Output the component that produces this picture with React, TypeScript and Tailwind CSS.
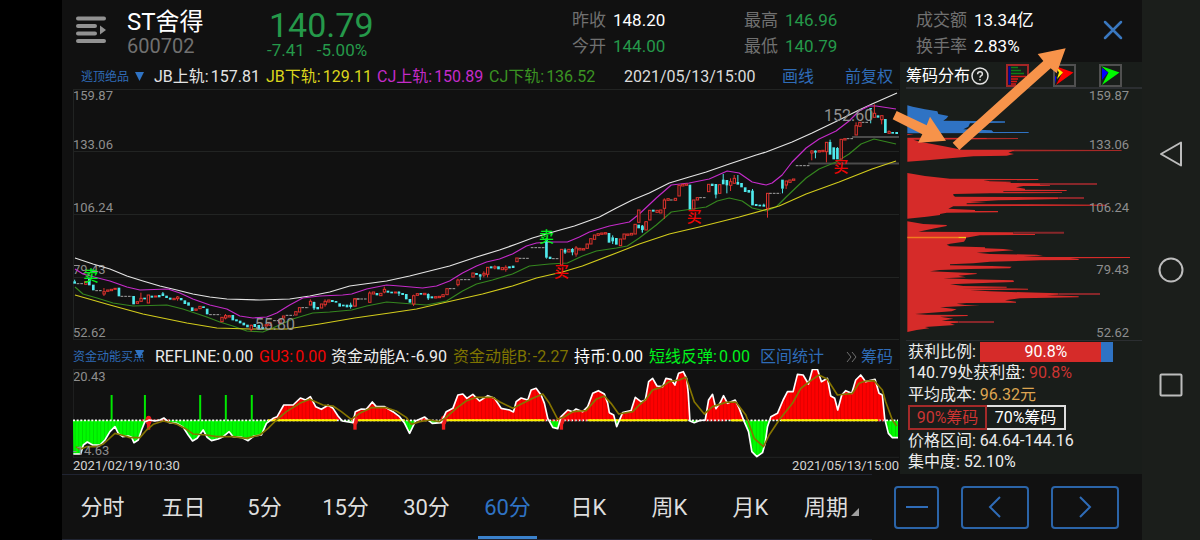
import { useState } from "react";

// [x, bodyTop, bodyBottom, up, high?, low?]
type Bar = [number, number, number, number, number?, number?];

const sessions: { origin: string; bars: Bar[]; flats: number[][] }[] = [
  {
    origin: "translate(60 230) scale(0.33333)",
    bars: [
      [44, 155, 160, 0, 149], [77, 155, 163, 1], [88, 144, 165, 0], [100, 165, 180, 0], [132, 185, 192, 1, 174, 198],
      [143, 180, 184, 1], [154, 178, 182, 1], [165, 175, 178, 1], [177, 174, 198, 0], [221, 199, 222, 0],
      [232, 215, 220, 1], [243, 205, 214, 1, 188], [254, 204, 207, 0], [265, 195, 219, 1], [276, 198, 202, 0],
      [287, 198, 201, 1], [298, 196, 201, 0], [309, 191, 197, 0, 186], [320, 198, 203, 0], [331, 204, 208, 0],
      [342, 205, 209, 1], [353, 201, 206, 1, 198, 212], [364, 205, 210, 0], [375, 212, 221, 0], [386, 218, 226, 0],
      [397, 233, 242, 0], [408, 237, 241, 1], [420, 229, 236, 1], [431, 230, 233, 0], [442, 237, 252, 0],
      [486, 262, 275, 1], [497, 257, 264, 1, 252, 268], [508, 257, 261, 1], [519, 256, 270, 0], [530, 269, 273, 0],
      [541, 273, 279, 0], [552, 279, 285, 0], [563, 285, 291, 0], [574, 286, 298, 1, 284, 304], [585, 283, 290, 0],
      [597, 286, 297, 0], [608, 292, 297, 0], [619, 284, 288, 1], [630, 277, 286, 1], [660, 268, 280, 1], [671, 258, 264, 1],
      [708, 245, 255, 1], [719, 233, 246, 1], [752, 214, 225, 1, 208], [763, 217, 234, 0, 215, 240], [774, 232, 237, 0],
      [785, 222, 234, 1], [796, 214, 224, 1, 208, 230], [807, 210, 216, 1], [818, 211, 215, 0], [829, 214, 217, 0],
      [840, 221, 229, 0], [851, 225, 228, 0], [862, 225, 231, 0], [873, 226, 230, 0, 218, 236], [886, 206, 228, 1],
    ],
    flats: [[50, 72, 161], [106, 128, 182], [182, 216, 199], [448, 482, 254], [640, 656, 272], [678, 702, 256], [725, 748, 233], [892, 900, 207]],
  },
  {
    origin: "translate(350 170) scale(0.33333)",
    bars: [
      [4, 405, 410, 0], [15, 387, 408, 1], [60, 369, 397, 1, 364], [71, 366, 372, 1], [82, 370, 375, 0], [93, 370, 377, 1],
      [104, 358, 366, 1, 350, 370], [115, 363, 367, 0], [126, 366, 369, 0], [137, 366, 369, 1], [148, 366, 370, 0, 364, 378],
      [159, 370, 374, 0], [170, 373, 387, 0], [181, 388, 397, 0], [192, 377, 402, 1, 374, 408], [203, 371, 376, 1],
      [214, 370, 373, 0], [225, 370, 374, 1], [236, 373, 384, 0, 370, 390], [247, 380, 384, 0], [258, 380, 384, 1],
      [269, 379, 383, 1], [280, 374, 380, 1], [292, 356, 374, 1], [325, 330, 344, 1, 326, 349], [370, 309, 321, 1],
      [381, 310, 314, 0], [392, 314, 319, 0, 312, 330], [403, 310, 315, 1, 304, 322], [414, 292, 313, 1, 292, 322],
      [425, 290, 294, 0], [436, 290, 294, 1, 286, 298], [447, 290, 297, 0], [458, 293, 299, 1], [469, 292, 298, 1, 286, 305],
      [480, 290, 294, 0], [491, 288, 293, 0], [502, 264, 275, 1], [591, 207, 262, 0, 205, 266], [602, 261, 266, 0],
      [636, 238, 285, 1], [647, 240, 247, 0, 235, 252], [658, 238, 246, 1], [669, 238, 246, 0, 234, 256], [680, 234, 252, 1, 228, 260],
      [691, 235, 240, 1], [702, 236, 240, 1], [713, 222, 235, 1], [724, 206, 222, 1], [735, 195, 208, 1], [746, 191, 196, 1],
      [757, 189, 193, 1], [768, 188, 192, 1], [779, 190, 217, 0], [790, 203, 213, 0, 196, 222], [801, 205, 223, 0],
      [813, 207, 227, 1], [824, 192, 207, 1], [835, 192, 196, 1], [846, 190, 195, 1], [857, 163, 192, 1],
      [868, 165, 174, 0], [879, 168, 178, 0, 166, 188], [890, 157, 177, 1],
    ],
    flats: [[21, 54, 387], [298, 320, 356], [332, 364, 329], [508, 540, 265], [544, 586, 233], [608, 630, 266]],
  },
  {
    origin: "translate(640 85) scale(0.33333)",
    bars: [
      [-2, 375, 412, 1], [9, 426, 434, 0, 420, 442], [20, 410, 435, 1], [31, 376, 405, 1], [42, 375, 379, 0], [53, 376, 382, 1], [64, 375, 384, 1],
      [75, 345, 370, 1, 340, 402], [86, 341, 346, 1], [108, 340, 346, 1], [119, 301, 333, 1], [130, 298, 303, 1],
      [141, 297, 301, 1], [152, 300, 372, 0], [163, 345, 372, 1], [174, 338, 345, 1], [208, 298, 320, 1],
      [219, 297, 302, 0], [230, 298, 328, 0, 298, 340], [241, 299, 325, 1], [252, 285, 297, 0, 267], [263, 286, 300, 0, 286, 325],
      [274, 290, 301, 1, 280, 318], [285, 280, 295, 1, 270], [296, 292, 298, 0, 270], [307, 295, 306, 0], [318, 308, 320, 0],
      [329, 316, 322, 0], [340, 318, 360, 0, 312], [351, 358, 362, 0], [362, 360, 363, 0], [374, 360, 364, 0, 356],
      [385, 325, 370, 1, 325, 398], [430, 285, 310, 0, 285, 325], [441, 288, 300, 1, 288, 312], [452, 285, 292, 1],
      [463, 282, 286, 1], [518, 198, 204, 1, 196, 226], [529, 198, 202, 0, 196, 220], [540, 197, 201, 1], [551, 196, 200, 1],
      [562, 172, 200, 1, 172, 232], [573, 172, 208, 0, 164], [584, 188, 222, 0], [595, 190, 222, 0, 186], [606, 163, 222, 1],
      [617, 161, 165, 1], [651, 122, 150, 1, 112], [662, 112, 124, 1], [695, 70, 72, 0, 70, 115], [706, 85, 97, 1, 58],
      [717, 92, 97, 0], [728, 92, 104, 1, 92, 118], [739, 103, 143, 0], [750, 140, 145, 1, 136], [761, 142, 145, 0], [773, 142, 146, 0],
    ],
    flats: [[92, 104, 345], [180, 202, 338], [390, 424, 325], [470, 512, 242], [623, 645, 161], [668, 690, 112]],
  },
];

const bands = [
  { color: "#e4e4e4", points: "75,258 93,264 110,269 127,276 143,281 160,286 177,290 193,294 210,297 227,299 260,300 290,299 310,296 330,292 350,286 387,281 410,276 450,266 477,257 500,250 517,244 533,238 550,233 575,226 600,217 617,208 633,200 650,193 670,183 690,177 707,172 730,164 757,155 767,152 793,142 813,133 840,120 860,110 873,104 898,93" },
  { color: "#c42bc9", points: "75,269 83,274 98,278 110,281 127,287 140,290 168,289 180,293 193,299 210,305 227,309 240,316 253,318 267,317 277,313 290,305 303,298 320,296 343,295 352,294 367,289 387,285 400,286 423,288 437,286 450,281 463,273 477,266 487,262 500,259 513,254 527,246 537,243 550,242 568,242 580,237 590,232 610,226 630,222 640,214 657,198 672,185 690,183 710,179 728,171 740,173 753,182 767,185 773,183 783,175 793,162 807,148 820,139 837,131 850,121 860,111 870,106 877,106 897,109" },
  { color: "#35861f", points: "75,287 83,294 97,298 113,303 133,306 167,305 183,309 207,317 220,322 233,326 247,331 263,332 273,328 293,319 313,313 330,312 352,310 367,306 387,302 400,303 427,305 447,301 463,291 477,284 493,280 513,274 530,266 550,264 568,263 583,256 597,251 617,248 628,246 640,238 657,225 672,212 707,207 718,201 730,198 743,201 753,208 767,211 777,207 787,197 807,178 820,169 837,162 850,154 862,144 875,139 897,144" },
  { color: "#d2cb1c", points: "75,295 110,305 143,314 187,323 217,328 250,329 287,329 320,324 355,318 390,313 417,309 443,303 483,294 513,286 537,278 563,272 583,266 617,253 640,244 670,234 700,227 740,217 780,206 807,194 840,182 873,169 897,161" },
];

const signals = [
  { x: 91, y: 281, text: "卖" },
  { x: 547, y: 242, text: "卖" },
  { x: 562, y: 277, text: "买" },
  { x: 695, y: 222, text: "买" },
  { x: 842, y: 172, text: "买" },
];

// momentum lines, three units per pixel, zero line at 241
const lineA =
  "40,342 62,342 70,315 82,306 98,315 120,315 135,300 150,275 165,260 175,280 188,290 205,288 215,292 222,308 235,300 245,270 255,245 268,240 285,243 300,240 312,234 328,248 350,250 370,262 385,285 398,303 412,295 430,270 442,292 455,302 475,297 490,290 508,275 520,290 545,292 565,302 582,288 605,285 620,250 640,235 652,230 672,195 700,195 722,174 738,180 752,170 768,200 785,208 805,196 820,205 835,228 848,243 880,248 887,215 905,207 920,208 938,186 950,200 975,200 1000,215 1020,230 1035,250 1050,280 1068,243 1095,231 1118,250 1145,248 1160,215 1180,205 1195,165 1210,162 1222,175 1240,163 1260,183 1285,167 1305,175 1325,205 1350,210 1362,216 1370,185 1385,174 1405,180 1415,150 1430,145 1445,165 1455,190 1465,235 1480,262 1495,266 1505,230 1525,210 1540,215 1550,207 1570,215 1585,200 1600,160 1617,152 1635,162 1645,190 1650,218 1663,225 1672,260 1690,218 1715,212 1728,172 1745,185 1758,180 1768,125 1780,115 1793,138 1810,140 1820,115 1835,118 1847,135 1858,100 1872,95 1882,115 1887,160 1892,243 1905,248 1920,242 1938,240 1948,180 1960,163 1970,206 1982,190 1993,167 2005,190 2028,180 2040,205 2055,245 2068,275 2078,335 2093,350 2110,338 2118,310 2125,260 2135,230 2155,220 2172,180 2185,155 2202,155 2215,103 2232,105 2248,132 2260,88 2275,88 2287,125 2305,115 2315,168 2327,175 2336,210 2348,165 2360,152 2378,160 2390,120 2405,105 2420,125 2448,118 2460,160 2470,165 2477,235 2488,280 2500,293 2517,293";
const lineB =
  "48,320 60,328 80,320 110,320 130,312 165,280 185,285 210,293 240,293 260,270 280,253 310,243 350,252 380,268 400,282 440,285 470,290 520,290 560,295 600,285 625,265 650,240 680,215 720,190 750,178 790,195 820,198 845,215 875,238 900,220 935,203 980,203 1010,213 1040,232 1055,253 1080,245 1110,240 1140,245 1160,232 1190,205 1220,183 1250,172 1300,172 1320,185 1360,205 1390,190 1420,175 1450,162 1470,190 1495,238 1515,230 1540,215 1580,212 1610,178 1635,168 1655,190 1678,222 1720,215 1740,195 1760,178 1780,150 1805,142 1830,125 1860,120 1880,112 1890,140 1905,185 1935,222 1960,200 2000,187 2030,186 2060,225 2085,295 2113,320 2130,285 2160,240 2200,190 2225,145 2260,118 2280,105 2305,118 2335,165 2380,160 2400,130 2420,123 2445,122 2470,150 2480,185 2500,240 2513,258";

const refSpans = [[625, 832], [888, 1035], [1156, 1455], [1585, 1885], [2015, 2052], [2165, 2457]];
const refRed = [[245, 330], [1075, 1105], [1455, 1585], [1690, 1725], [1938, 2000], [2457, 2475]];
const spikes = [155, 255, 421, 498, 576];
const pins = [266, 886, 1152, 1506];

const chipShapes = {
  blue: "52,316 68,320 105,328 142,334 145,342 175,348 170,355 160,362 345,364 345,368 240,370 235,380 220,388 305,391 310,396 416,396 416,399 52,400",
  upper: "52,413 384,414 384,417 70,419 90,425 130,433 170,440 215,449 694,450 694,453 368,454 355,458 372,462 350,467 250,469 180,475 120,480 52,485",
  middle: "52,9 70,12 105,18 180,26 445,27 445,30 280,31 300,34 362,35 362,38 345,39 450,40 450,45 480,46 480,48 400,48 378,52 405,56 405,59 530,60 530,63 340,64 340,66 516,67 516,69 300,70 190,72 190,76 195,80 505,82 505,87 325,91 240,96 290,98 230,100 230,103 425,103 650,104 650,107 190,109 175,116 255,120 255,123 324,123 324,127 170,128 150,132 150,135 110,140 52,146",
  lower: "52,154 100,162 170,165 170,168 135,175 85,185 370,187 370,191 435,192 435,195 270,196 228,203 228,206 222,215 180,221 170,224 180,229 285,232 285,235 340,237 372,241 260,248 300,252 440,254 459,257 400,259 470,261 720,261 720,264 540,265 566,267 566,270 450,271 300,275 250,280 180,283 180,286 305,288 365,290 360,295 240,297 150,300 120,304 190,307 260,310 260,312 205,317 228,322 160,325 240,328 370,331 372,336 300,338 180,343 220,348 350,350 350,353 210,355 414,356 414,359 240,361 300,364 400,367 505,370 505,374 470,376 566,379 566,382 390,385 345,391 378,395 378,398 230,399 200,401 225,405 270,406 150,412 200,418 185,424 75,432 110,434 233,435 233,438 150,440 190,446 155,452 205,454 205,458 180,460 195,465 105,471 118,475 80,480 52,486",
};

const priceTicks = ["133.06", "106.24", "79.43", "52.62"];
const periods = ["分时", "五日", "5分", "15分", "30分", "60分", "日K", "周K", "月K"];

const quotes = [
  { label: "昨收", value: "148.20", color: "text-white" },
  { label: "今开", value: "144.00", color: "text-[#25994a]" },
  { label: "最高", value: "146.96", color: "text-[#25994a]" },
  { label: "最低", value: "140.79", color: "text-[#25994a]" },
  { label: "成交额", value: "13.34亿", color: "text-white" },
  { label: "换手率", value: "2.83%", color: "text-white" },
];

const bandReadings = [
  { label: "JB上轨:", value: "157.81", style: "w-[112px] text-[#e4e4e4]" },
  { label: "JB下轨:", value: "129.11", style: "w-[111px] text-[#dcd61c]" },
  { label: "CJ上轨:", value: "150.89", style: "w-[112px] text-[#c42bc9]" },
  { label: "CJ下轨:", value: "136.52", style: "w-[135px] text-[#3b9422]" },
];

const momentumReadings = [
  { label: "REFLINE:", value: "0.00", style: "w-[104px] text-[#ececec]" },
  { label: "GU3:", value: "0.00", style: "w-[72px] text-[#f20505]" },
  { label: "资金动能A:", value: "-6.90", style: "w-[122px] text-[#ececec]" },
  { label: "资金动能B:", value: "-2.27", style: "w-[121px] text-[#7f7400]" },
  { label: "持币:", value: "0.00", style: "w-[75px] text-white" },
  { label: "短线反弹:", value: "0.00", style: "w-[111px] text-[#00f21c]" },
];

function Reading({ label, value, style }: { label: string; value: string; style: string }) {
  return (
    <span className={`flex gap-[2px] ${style}`}>
      <span>{label}</span>
      <span>{value}</span>
    </span>
  );
}

function Ticks({ right = false }: { right?: boolean }) {
  return (
    <div className={`absolute inset-0 flex flex-col text-[13px] leading-[14px] text-[#8e8e8e] pointer-events-none ${right ? "text-right pr-[13px]" : ""}`}>
      {priceTicks.map((tick, i) => (
        <div key={tick} className="flex-1 flex flex-col justify-end">
          {i === 0 && <span className="mb-auto">159.87</span>}
          <span>{tick}</span>
        </div>
      ))}
    </div>
  );
}

function Candle({ bar }: { bar: Bar }) {
  const [x, top, bottom, up, high, low] = bar;
  const wick = `M${x} ${high ?? top}V${top}M${x} ${bottom}V${low ?? bottom}`;

  if (up) {
    return (
      <g stroke="#e0332e" strokeWidth="3">
        <path d={wick} />
        <rect x={x - 3} y={top} width="7" height={bottom - top} fill="#111111" />
      </g>
    );
  }
  return (
    <g>
      <path d={wick} stroke="#4fe9ec" strokeWidth="3" />
      <rect x={x - 4} y={top - 1} width="8" height={bottom - top + 2} fill="#4fe9ec" />
    </g>
  );
}

function PriceChart() {
  return (
    <div className="relative h-[251px] ml-[11px]">
      <Ticks />
      <svg className="absolute inset-0 w-full h-full" viewBox="73 89 827 251" preserveAspectRatio="none">
        <path d="M73 89.5H900M73 151.5H900M73 214.5H900M73 277.5H900M73 339.5H900M73.500 89V340" stroke="#222423" fill="none" />
        <path d="M853 137H900M809 163.500H900" stroke="#4b4b4b" strokeWidth="2" />
        {bands.map((b) => (
          <polyline key={b.color} points={b.points} fill="none" stroke={b.color} strokeWidth="1.2" strokeLinejoin="round" />
        ))}
        {sessions.map((s) => (
          <g key={s.origin} transform={s.origin}>
            {s.bars.map((bar) => (
              <Candle key={bar[0]} bar={bar} />
            ))}
            {s.flats.map(([x1, x2, y]) => (
              <path key={x1} d={`M${x1} ${y}H${x2}`} stroke="#a5a5a5" strokeWidth="3" strokeDasharray="8 3" />
            ))}
          </g>
        ))}
        <g fill="#929292" fontSize="16">
          <text x="825" y="121">152.60</text>
          <text x="255" y="330">55.80</text>
        </g>
        <g fontSize="15" fontWeight="500" textAnchor="middle">
          {signals.map((s) => (
            <text key={s.x} x={s.x} y={s.y} fill={s.text === "卖" ? "#00f21c" : "#ee0505"}>{s.text}</text>
          ))}
        </g>
      </svg>
    </div>
  );
}

function MomentumChart() {
  const area = `39,241 ${lineA} 2517,241`;
  return (
    <div className="relative h-[89px] ml-[11px] text-[13px] leading-[14px] text-[#8e8e8e]">
      <span className="absolute left-0 top-px">20.43</span>
      <svg className="absolute inset-0 w-full h-full" viewBox="39 87 2481 267" preserveAspectRatio="none">
        <defs>
          <clipPath id="above"><rect x="39" y="80" width="2481" height="161" /></clipPath>
          <clipPath id="below"><rect x="39" y="241" width="2481" height="120" /></clipPath>
          <pattern id="stripes" width="11" height="20" patternUnits="userSpaceOnUse"><rect width="1" height="20" fill="#000000" opacity="0.35" /></pattern>
        </defs>
        <path d="M39 88H2520M39 352H2520M40 87V354" stroke="#222423" strokeWidth="3" />
        <polygon points={area} fill="#fd0000" clipPath="url(#above)" />
        <polygon points={area} fill="#00fa00" clipPath="url(#below)" />
        <polygon points={area} fill="url(#stripes)" />
        {spikes.map((x) => (
          <path key={x} d={`M${x} 165V241`} stroke="#00e800" strokeWidth="6" />
        ))}
        <path d="M39 241H2517" stroke="#ffffff" strokeWidth="5" strokeDasharray="6 5" />
        {refRed.map(([a, b]) => (
          <path key={a} d={`M${a} 241H${b}`} stroke="#ff2020" strokeWidth="5" strokeDasharray="5 6" />
        ))}
        {refSpans.map(([a, b]) => (
          <path key={a} d={`M${a} 241H${b}`} stroke="#fff200" strokeWidth="6" />
        ))}
        {pins.map((x) => (
          <g key={x} fill="#ee1c1c">
            <ellipse cx={x} cy="241" rx="9" ry="14" />
            <rect x={x - 5} y="243" width="10" height="26" />
          </g>
        ))}
        <polyline points={lineA} fill="none" stroke="#ffffff" strokeWidth="5" strokeLinejoin="round" />
        <polyline points={lineB} fill="none" stroke="#857400" strokeWidth="5" strokeLinejoin="round" />
      </svg>
      <span className="absolute left-0 bottom-0">-14.63</span>
    </div>
  );
}

function ChipChart() {
  return (
    <div className="relative h-[251px] ml-[7px]">
      <svg className="absolute left-0 top-0 h-full w-[235px]" viewBox="907 89 235 251">
        <g transform="translate(890 0) scale(0.33333)">
          <polygon points={chipShapes.blue} fill="#2f73c4" />
          <path d="M52 402H72L52 406Z" fill="#d62b29" />
          <polygon points={chipShapes.upper} fill="#d62b29" />
          <path d="M290 415.500H384M372 451.500H694" stroke="#a52a28" strokeWidth="3" />
        </g>
        <g transform="translate(890 170) scale(0.33333)">
          <polygon points={chipShapes.middle} fill="#d62b29" />
          <polygon points={chipShapes.lower} fill="#d62b29" />
          <path d="M450 42H621M505 84H582M370 188.500H522M505 372H630M205 456H312" stroke="#87272a" strokeWidth="6" />
          <path d="M52 202.500H205" stroke="#f07a1f" strokeWidth="4" />
          <path d="M205 202.500H228" stroke="#f2c81c" strokeWidth="4" />
        </g>
      </svg>
      <Ticks right />
    </div>
  );
}

function ChipPanel() {
  const [range, setRange] = useState("90");

  return (
    <aside className="w-[242px] shrink-0 bg-[#191d1a] text-base leading-5 text-[#ececec]">
      <div className="h-[27px] pt-[2px] ml-[6px] flex items-center border-b-2 border-[#2b2e31] whitespace-nowrap">
        <span className="text-white">筹码分布</span>
        <button aria-label="说明" className="ml-px">
          <svg width="18" height="18" viewBox="0 0 18 18" fill="none" stroke="#e4e4e4" strokeWidth="1.5">
            <circle cx="9" cy="9" r="8" />
            <path d="M6.600 7.200Q6.700 4.700 9 4.700Q11.400 4.700 11.400 6.900Q11.400 8.100 10 8.900Q9 9.500 9 10.700M9 12V13.600" />
          </svg>
        </button>
        <button aria-label="筹码图" className="ml-[17px]">
          <svg width="23" height="23" viewBox="0 0 23 23">
            <rect x="1" y="1" width="21" height="21" fill="#191d1a" stroke="#a32626" strokeWidth="2" />
            <path d="M3.500 2.500V20.500" stroke="#0505a0" strokeWidth="2" />
            <path d="M5 3.500H12M5 6.500H15M5 9.500H18" stroke="#0c7d16" strokeWidth="1.500" />
            <path d="M5 12.500H20M5 15H12M5 17.500H11M5 20H10" stroke="#d81717" strokeWidth="1.500" />
          </svg>
        </button>
        <button aria-label="红色箭头" className="ml-6">
          <svg width="23" height="23" viewBox="0 0 23 23">
            <rect x="1" y="1" width="21" height="21" fill="#191d1a" stroke="#505050" strokeWidth="2" />
            <path d="M2 2L20.500 8.500L3 21L9.500 8.500Z" fill="#ff0000" />
            <path d="M2 2L10 8.500L4 15L6 8.500Z" fill="#ffee00" />
            <path d="M2 12L3.500 13L2 20Z" fill="#0000ff" />
          </svg>
        </button>
        <button aria-label="绿色箭头" className="ml-[23px]">
          <svg width="23" height="23" viewBox="0 0 23 23">
            <rect x="1" y="1" width="21" height="21" fill="#191d1a" stroke="#505050" strokeWidth="2" />
            <path d="M3 4L9 8.500L3 16Z" fill="#0000ff" />
            <path d="M2 2L20.500 8.500L3 21L9.500 8.500Z" fill="#00fa00" />
          </svg>
        </button>
      </div>

      <ChipChart />

      <div className="ml-[6px] pl-[2px] border-t border-[#2b2e31] whitespace-nowrap">
        <div className="flex items-center h-[21px]">
          <span>获利比例:</span>
          <div className="ml-1 w-[133px] h-5 flex bg-[#2f73c4] text-white">
            <span className="w-[121px] pl-[11px] bg-[#d62b29] text-center">90.8%</span>
          </div>
        </div>
        <p className="h-[22px] leading-[22px]">140.79处获利盘: <span className="text-[#cb3432]">90.8%</span></p>
        <p className="h-[21px] leading-[21px]">平均成本: <span className="text-[#dda551]">96.32元</span></p>
        <div className="flex h-[25px]">
          <button onClick={() => setRange("90")} className={`w-[79px] border-2 ${range === "90" ? "border-[#a32a29] text-[#cb3432]" : "border-[#dedede] text-white"}`}>
            90%筹码
          </button>
          <button onClick={() => setRange("70")} className={`w-[79px] border-2 border-l-0 ${range === "70" ? "border-[#a32a29] text-[#cb3432]" : "border-[#dedede] text-white"}`}>
            70%筹码
          </button>
        </div>
        <p className="h-[21px] leading-[21px]">价格区间: 64.64-144.16</p>
        <p className="h-[21px] leading-[21px]">集中度: 52.10%</p>
      </div>
    </aside>
  );
}

export default function App() {
  const [period, setPeriod] = useState("60分");

  return (
    <div className="relative min-h-screen flex bg-black overflow-hidden [font-family:Roboto,'Noto_Sans_CJK_SC',sans-serif]">
      <div className="w-[62px] shrink-0 bg-black" />

      <main className="flex-1 min-w-0 flex flex-col bg-[#111111]">
        <header className="h-[62px] flex whitespace-nowrap">
          <button aria-label="自选列表" className="ml-[14px] mt-4 self-start">
            <svg width="31" height="28" viewBox="0 0 31 28" stroke="#929292" strokeWidth="4" strokeLinecap="round">
              <path d="M2 2.500H28M2 10H19M2 17.500H19M2 25H28" />
              <path d="M24 9.500V18.500L30 14Z" fill="#929292" stroke="none" />
            </svg>
          </button>
          <div className="ml-5 mt-[10px] w-[140px]">
            <h1 className="text-2xl leading-6 text-white">ST舍得</h1>
            <p className="text-xl leading-6 text-[#707070]">600702</p>
          </div>
          <div className="w-[305px] mt-2 text-[#25994a]">
            <p className="pl-[2px] text-[34px] leading-[34px]">140.79</p>
            <p className="flex gap-3 text-[17px] leading-4"><span>-7.41</span><span>-5.00%</span></p>
          </div>
          <dl className="mt-[7px] grid grid-flow-col grid-rows-2 auto-cols-[172px] h-[52px] text-[17px] leading-[26px] text-[#707070]">
            {quotes.map((q) => (
              <div key={q.label} className="flex gap-[7px]">
                <dt>{q.label}</dt>
                <dd className={q.color}>{q.value}</dd>
              </div>
            ))}
          </dl>
          <button aria-label="关闭" className="ml-auto mr-[19px] mt-5 self-start">
            <svg width="20" height="20" viewBox="0 0 20 20" stroke="#3a78c0" strokeWidth="2.5" strokeLinecap="round">
              <path d="M2 2L18 18M18 2L2 18" />
            </svg>
          </button>
        </header>

        <div className="flex">
          <section className="flex-1 min-w-0 pr-px">
            <div className="h-[27px] pt-[2px] pl-[19px] flex items-center text-base leading-5 whitespace-nowrap">
              <button className="w-[73px] flex items-center gap-[6px] text-xs text-[#2f6cb8]">
                逃顶绝品
                <svg width="9" height="9" viewBox="0 0 9 9"><path d="M0 0H9L4.500 9Z" fill="#2f73c4" /></svg>
              </button>
              {bandReadings.map((r) => (
                <Reading key={r.label} {...r} />
              ))}
              <span className="w-[158px] text-[#dcdcdc]">2021/05/13/15:00</span>
              <button className="w-[63px] text-left text-[#2f6cb8]">画线</button>
              <button className="text-[#2f6cb8]">前复权</button>
            </div>
            <PriceChart />
            <div className="h-[29px] pt-[5px] pl-[11px] flex items-center text-base leading-5 whitespace-nowrap">
              <button className="relative w-[82px] text-left text-xs text-[#2f6cb8]">
                资金动能买点
                <svg className="absolute left-[62px] top-px" width="9" height="9" viewBox="0 0 9 9"><path d="M0 0H9L4.500 9Z" fill="#2f73c4" /></svg>
              </button>
              {momentumReadings.map((r) => (
                <Reading key={r.label} {...r} />
              ))}
              <button className="w-[86px] text-left text-[#2f6cb8]">区间统计</button>
              <button className="flex items-center gap-1 text-[#2f6cb8]">
                <svg width="11" height="12" viewBox="0 0 11 12" fill="none" stroke="#707070"><path d="M1 1L5 6L1 11M6 1L10 6L6 11" /></svg>
                筹码
              </button>
            </div>
            <MomentumChart />
            <div className="h-4 pl-[11px] flex justify-between text-[13px] leading-4 text-[#d4d4d4]">
              <span>2021/02/19/10:30</span>
              <span>2021/05/13/15:00</span>
            </div>
          </section>
          <ChipPanel />
        </div>

        <footer className="flex-1 min-h-[66px] flex">
          <nav className="flex-1 flex border-y border-[#202432] text-[22px] leading-8 text-[#dedede]">
            {periods.map((p) => (
              <button
                key={p}
                onClick={() => setPeriod(p)}
                className={`flex-1 relative pt-[2px] ${p === period ? "text-[#2f73c4]" : ""}`}
              >
                {p}
                {p === period && <span className="absolute left-[11px] right-[11px] bottom-0 h-[3px] bg-[#3b82cc]" />}
              </button>
            ))}
            <button className="flex-1 pt-[2px] flex items-center justify-center gap-[3px]">
              周期
              <svg className="mt-2" width="8" height="8" viewBox="0 0 8 8"><path d="M8 0V8H0Z" fill="#a0a0a0" /></svg>
            </button>
          </nav>
          <div className="w-[270px] pl-[22px] flex items-center gap-[22px]">
            <button aria-label="缩小" className="w-[45px] h-[43px] border-2 border-[#2b64a8] rounded flex items-center justify-center">
              <svg width="24" height="4" viewBox="0 0 24 4" stroke="#2f6cb8" strokeWidth="2"><path d="M1 2H23" /></svg>
            </button>
            <button aria-label="向左" className="w-[68px] h-[43px] border-2 border-[#2b64a8] rounded flex items-center justify-center">
              <svg width="14" height="24" viewBox="0 0 14 24" fill="none" stroke="#2f6cb8" strokeWidth="2"><path d="M12 2L2 12L12 22" /></svg>
            </button>
            <button aria-label="向右" className="w-[68px] h-[43px] border-2 border-[#2b64a8] rounded flex items-center justify-center">
              <svg width="14" height="24" viewBox="0 0 14 24" fill="none" stroke="#2f6cb8" strokeWidth="2"><path d="M2 2L12 12L2 22" /></svg>
            </button>
          </div>
        </footer>
      </main>

      <nav className="w-[58px] shrink-0 pb-[2px] bg-[#1b1e1b] flex flex-col items-center justify-center gap-[90px]">
        <button aria-label="返回">
          <svg width="26" height="26" viewBox="0 0 26 26" fill="none" stroke="#bdbdbd" strokeWidth="2" strokeLinejoin="round"><path d="M23 1.500V24.500L3 13Z" /></svg>
        </button>
        <button aria-label="主屏幕">
          <svg width="26" height="26" viewBox="0 0 26 26" fill="none" stroke="#bdbdbd" strokeWidth="2"><circle cx="13" cy="13" r="11.500" /></svg>
        </button>
        <button aria-label="最近任务">
          <svg width="24" height="24" viewBox="0 0 24 24" fill="none" stroke="#bdbdbd" strokeWidth="2"><rect x="1.500" y="1.500" width="21" height="21" rx="1" /></svg>
        </button>
      </nav>

      <svg className="absolute right-0 top-0 pointer-events-none" width="310" height="180" viewBox="0 0 930 540" fill="#f7934a">
        <path d="M20 333L110 376L120 350L168 422L84 428L97 403L8 358Z" />
        <path d="M188 428L460 183L443 162L527 145L500 220L482 205L208 450Z" />
      </svg>
    </div>
  );
}
